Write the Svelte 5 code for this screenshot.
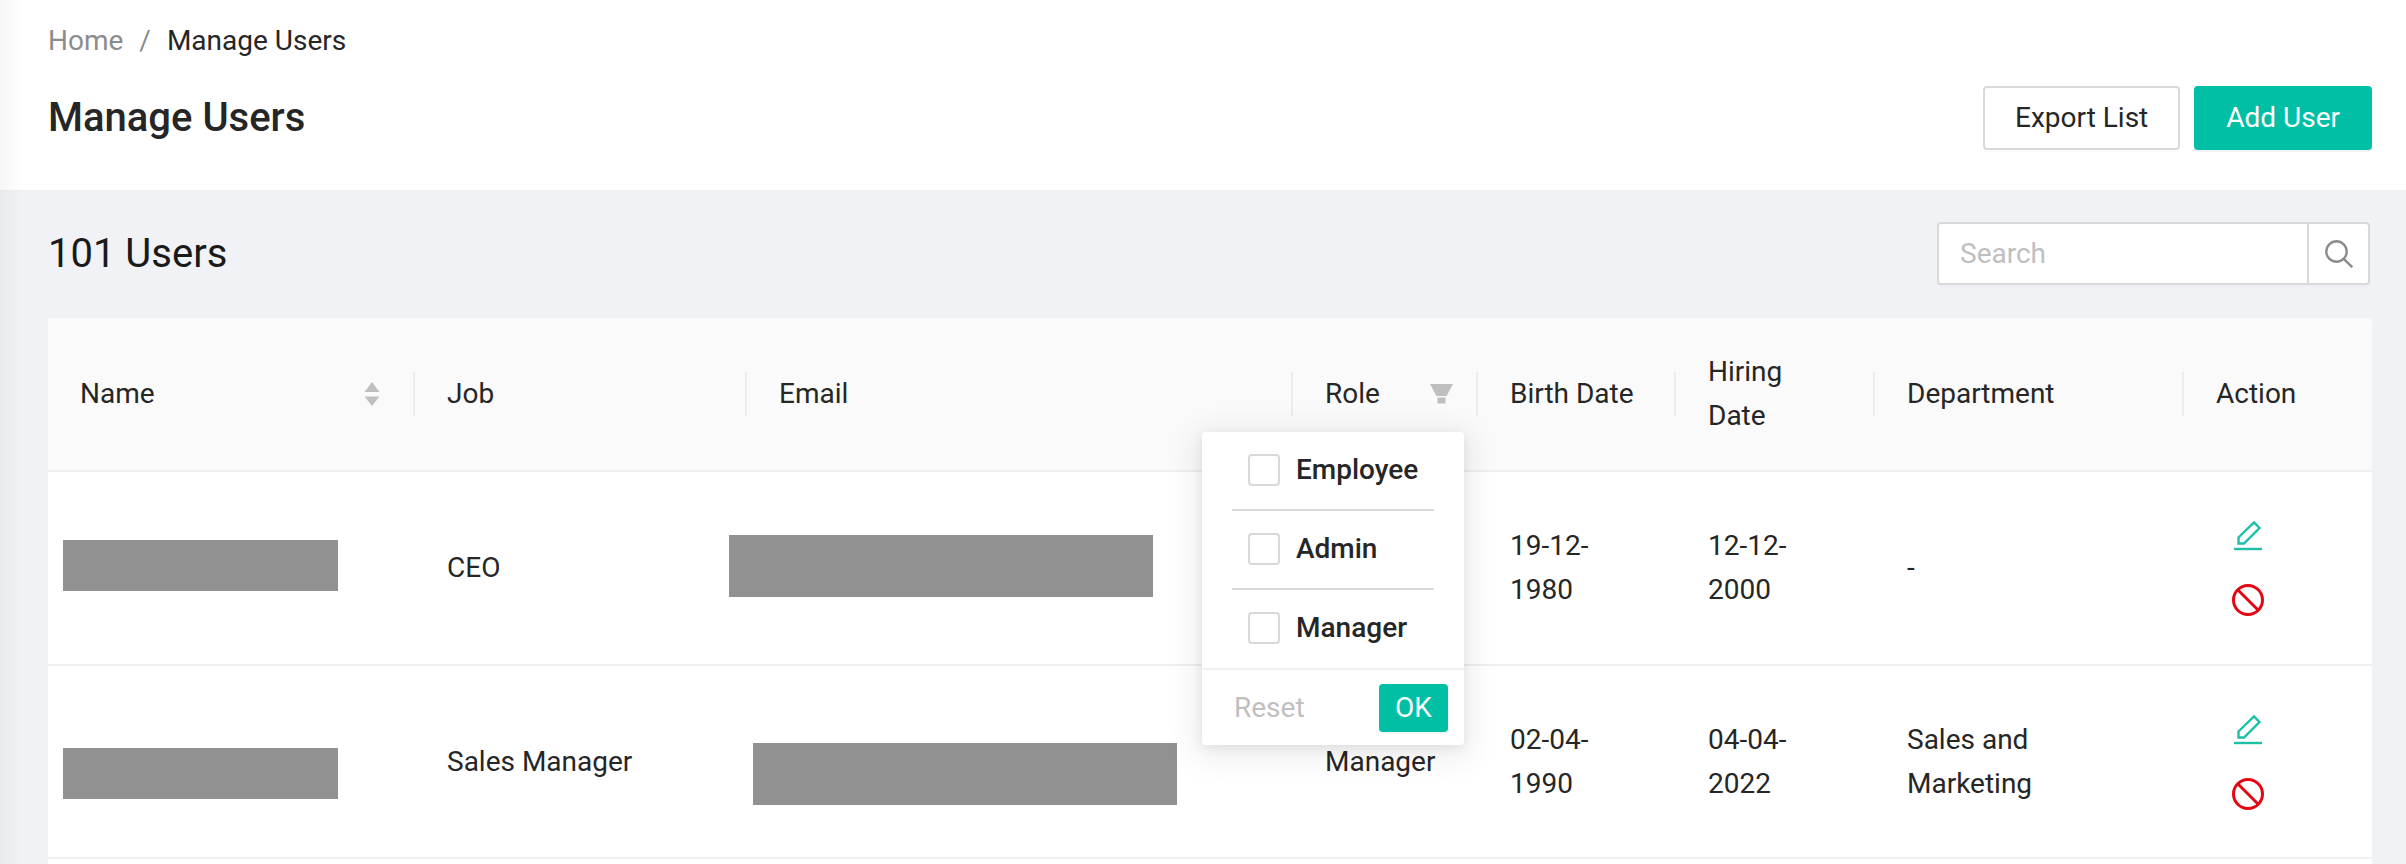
<script>
  const roles = ['Employee', 'Admin', 'Manager'];
</script>

<div class="page">
  <header class="top">
    <nav class="crumbs"><span class="home">Home</span><span class="sep">/</span><span>Manage Users</span></nav>
    <div class="titlebar">
      <h1>Manage Users</h1>
      <div class="actions">
        <button class="btn">Export List</button>
        <button class="btn primary">Add User</button>
      </div>
    </div>
  </header>

  <main class="content">
    <div class="toolbar">
      <h2>101 Users</h2>
      <div class="search">
        <span class="ph">Search</span>
        <span class="sbtn">
          <svg width="28" height="28" viewBox="0 0 28 28" fill="none" stroke="#8c8c8c" stroke-width="2.4"><circle cx="11.5" cy="11.5" r="10.2"/><path d="M18.800 18.800l8.500 8.500"/></svg>
        </span>
      </div>
    </div>

    <div class="card">
      <table>
        <colgroup>
          <col style="width:367px"/><col style="width:332px"/><col style="width:546px"/><col style="width:185px"/>
          <col style="width:198px"/><col style="width:199px"/><col style="width:309px"/><col style="width:188px"/>
        </colgroup>
        <thead>
          <tr>
            <th>
              <div class="thflex">Name
                <svg class="sort" width="16" height="24" viewBox="0 0 16 24" fill="#bfbfbf"><path d="M8 0l7.500 10H.5z"/><path d="M8 24L.5 14.500h15z"/></svg>
              </div>
            </th>
            <th class="s">Job</th>
            <th class="s">Email</th>
            <th class="s">
              <div class="thflex">Role
                <svg class="filter" width="23" height="20" viewBox="0 0 23 20" fill="#bfbfbf"><path d="M0 0h23l-6.500 12h-10z"/><path d="M7.500 13.500h8v6h-8z"/></svg>
              </div>
            </th>
            <th class="s">Birth Date</th>
            <th class="s">Hiring Date</th>
            <th class="s">Department</th>
            <th class="s">Action</th>
          </tr>
        </thead>
        <tbody>
          <tr class="r1">
            <td><span class="redact name n1"></span></td>
            <td>CEO</td>
            <td><span class="redact em1"></span></td>
            <td></td>
            <td>19-12-1980</td>
            <td>12-12-2000</td>
            <td>-</td>
            <td>
              <div class="icons">
                <svg class="edit" width="32" height="32" viewBox="0 0 32 32" fill="none" stroke="#1dbfa6" stroke-width="2.4"><path d="M5.500 17.500L21 2.500l5.500 5.500L11 23.500H5.500z"/><path d="M1 29h28"/></svg>
                <svg width="32" height="32" viewBox="0 0 32 32" fill="none" stroke="#e30613" stroke-width="3"><circle cx="16" cy="16" r="14.500"/><path d="M6 6l20 20"/></svg>
              </div>
            </td>
          </tr>
          <tr class="r2">
            <td><span class="redact name n2"></span></td>
            <td>Sales Manager</td>
            <td><span class="redact em2"></span></td>
            <td>Manager</td>
            <td>02-04-1990</td>
            <td>04-04-2022</td>
            <td>Sales and Marketing</td>
            <td>
              <div class="icons">
                <svg class="edit" width="32" height="32" viewBox="0 0 32 32" fill="none" stroke="#1dbfa6" stroke-width="2.4"><path d="M5.500 17.500L21 2.500l5.500 5.500L11 23.500H5.500z"/><path d="M1 29h28"/></svg>
                <svg width="32" height="32" viewBox="0 0 32 32" fill="none" stroke="#e30613" stroke-width="3"><circle cx="16" cy="16" r="14.500"/><path d="M6 6l20 20"/></svg>
              </div>
            </td>
          </tr>
        </tbody>
      </table>

      <div class="pop">
        <ul>
          {#each roles as r}
            <li><span class="box"></span><span class="lbl">{r}</span></li>
          {/each}
        </ul>
        <div class="popfoot">
          <span class="reset">Reset</span>
          <button class="ok">OK</button>
        </div>
      </div>
    </div>
  </main>
</div>

<style>
  :global(body) { margin: 0; background: #f0f2f5; }
  .page {
    position: relative;
    font-family: Roboto, "Liberation Sans", sans-serif;
    font-size: 28px;
    line-height: 44px;
    color: #262626;
    height: 864px;
    overflow: hidden;
    box-sizing: border-box;
  }
  .page::after {
    content: ""; position: absolute; left: 0; top: 0; bottom: 0; width: 22px; pointer-events: none;
    background: linear-gradient(90deg, rgba(0,0,0,.035), rgba(0,0,0,0));
  }
  .top { height: 190px; box-sizing: border-box; background: #fff; padding: 19px 34px 0 48px; }
  .crumbs { display: flex; gap: 16px; height: 44px; }
  .home, .sep { color: #8c8c8c; }
  .titlebar { display: flex; justify-content: space-between; align-items: center; margin-top: 23px; height: 64px; }
  h1 { margin: 0; font-size: 40px; font-weight: 500; line-height: 56px; color: #262626; }
  .actions { display: flex; gap: 14px; }
  .btn {
    font: inherit; height: 64px; padding: 0 30px; border: 2px solid #d9d9d9; border-radius: 4px;
    background: #fff; color: #262626; box-sizing: border-box; box-shadow: 0 2px 0 rgba(0,0,0,.016);
  }
  .primary { background: #00bfa5; border-color: #00bfa5; color: #fff; box-shadow: 0 2px 0 rgba(0,0,0,.045); }
  .content { padding: 32px 34px 0 48px; }
  .toolbar { display: flex; justify-content: space-between; align-items: flex-start; height: 64px; }
  h2 { margin: 4px 0 0; font-size: 40px; font-weight: 400; line-height: 56px; color: #1a1a1a; }
  .search {
    display: flex; width: 433px; height: 63px; box-sizing: border-box; margin-right: 2px;
    border: 2px solid #d9d9d9; border-radius: 4px; background: #fff; box-shadow: 0 2px 0 rgba(0,0,0,.016);
  }
  .ph { flex: 1; padding-left: 21px; color: #bfbfbf; line-height: 60px; }
  .sbtn { width: 61px; box-sizing: border-box; border-left: 2px solid #d9d9d9; display: flex; align-items: center; justify-content: center; }
  .card { position: relative; margin-top: 32px; height: 560px; background: #fff; border-radius: 4px 4px 0 0; }
  table { width: 100%; table-layout: fixed; border-collapse: separate; border-spacing: 0; }
  th {
    position: relative; height: 154px; padding: 0 32px; text-align: left; font-weight: 400;
    background: #fafafa; border-bottom: 2px solid #f0f0f0; box-sizing: border-box;
  }
  th:first-child { border-top-left-radius: 4px; }
  th:last-child { border-top-right-radius: 4px; }
  th.s::before {
    content: ""; position: absolute; left: -2px; top: 54px; width: 2px; height: 44px; background: #ececec;
  }
  .thflex { display: flex; justify-content: space-between; align-items: center; }
  .sort { margin-right: 3px; }
  .filter { margin-right: -7px; }
  td { position: relative; padding: 0 32px; border-bottom: 2px solid #f0f0f0; box-sizing: border-box; }
  .r1 td { height: 194px; }
  .r2 td { height: 193px; }
  .redact { position: absolute; background: #919191; }
  .name { left: 15px; width: 275px; height: 51px; }
  .n1 { top: 68px; }
  .n2 { top: 82px; }
  .em1 { left: -18px; top: 63px; width: 424px; height: 62px; }
  .em2 { left: 6px; top: 77px; width: 424px; height: 62px; }
  .icons { display: flex; flex-direction: column; align-items: flex-start; gap: 32px; margin-left: 16px; }
  .edit { margin-left: 1px; }
  .pop {
    position: absolute; left: 1154px; top: 114px; width: 262px; height: 313px; background: #fff; border-radius: 4px;
    box-shadow: 0 3px 12px rgba(0,0,0,.08), 0 6px 32px 8px rgba(0,0,0,.07); font-weight: 500;
  }
  ul { list-style: none; margin: 0; padding: 0 30px; height: 236px; box-sizing: border-box; }
  li { display: flex; align-items: center; gap: 16px; height: 79px; padding: 0 0 1px 16px; box-sizing: border-box; border-bottom: 2px solid #d9d9d9; }
  li:last-child { border-bottom-color: transparent; }
  .box { width: 32px; height: 32px; border: 2px solid #d9d9d9; border-radius: 4px; box-sizing: border-box; background: #fff; }
  .popfoot {
    display: flex; align-items: center; justify-content: space-between; height: 77px; box-sizing: border-box;
    padding: 0 16px 0 32px; border-top: 2px solid #f0f0f0; font-weight: 400;
  }
  .reset { color: #bfbfbf; }
  .ok { font: inherit; width: 69px; height: 48px; padding: 0; border: 0; border-radius: 4px; background: #00bfa5; color: #fff; box-shadow: 0 2px 0 rgba(0,0,0,.045); }
</style>
